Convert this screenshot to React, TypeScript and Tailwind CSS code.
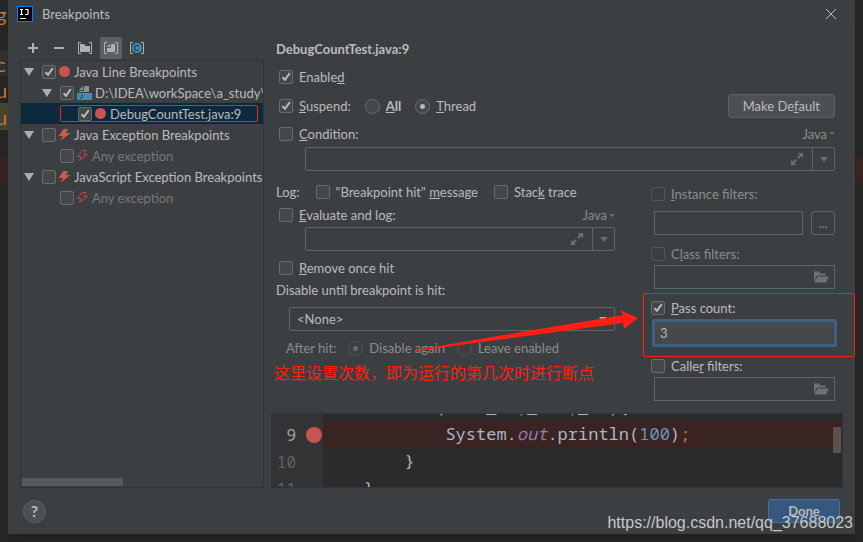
import { useState, type ReactNode } from "react";
import { clsx, type ClassValue } from "clsx";
import { twMerge } from "tailwind-merge";

function cn(...inputs: ClassValue[]) {
  return twMerge(clsx(inputs));
}

type TreeItem = {
  id: string;
  label: string;
  level: number;
  icon: "line" | "file" | "exception" | "exception-muted";
  checked?: boolean;
  expandable?: boolean;
  muted?: boolean;
  selected?: boolean;
};

const TREE: TreeItem[] = [
  { id: "java-line", label: "Java Line Breakpoints", level: 0, icon: "line", checked: true, expandable: true },
  { id: "file", label: "D:\\IDEA\\workSpace\\a_study\\", level: 1, icon: "file", checked: true, expandable: true },
  { id: "line-9", label: "DebugCountTest.java:9", level: 2, icon: "line", checked: true, selected: true },
  { id: "java-ex", label: "Java Exception Breakpoints", level: 0, icon: "exception", expandable: true },
  { id: "java-any", label: "Any exception", level: 1, icon: "exception-muted", muted: true },
  { id: "js-ex", label: "JavaScript Exception Breakpoints", level: 0, icon: "exception", expandable: true },
  { id: "js-any", label: "Any exception", level: 1, icon: "exception-muted", muted: true },
];

function CheckBox({ id, checked, disabled, label }: { id?: string; checked?: boolean; disabled?: boolean; label?: string }) {
  return (
    <span className="relative block size-[14px] shrink-0">
      <input
        id={id}
        type="checkbox"
        defaultChecked={checked}
        disabled={disabled}
        aria-label={label}
        className="peer block size-[14px] appearance-none rounded-xs border border-[#6b6b6b] bg-[#43494a] disabled:border-[#545556] disabled:bg-[#3c3f41]"
      />
      <svg viewBox="0 0 14 14" className="pointer-events-none absolute inset-0 hidden size-[14px] peer-checked:block">
        <path d="M3.5 7.2 6 9.8 10.8 3.2" fill="none" stroke="#bbbbbb" strokeWidth="2" />
      </svg>
    </span>
  );
}

function Option({ id, checked, disabled, className, children }: { id: string; checked?: boolean; disabled?: boolean; className?: string; children: ReactNode }) {
  return (
    <div className={cn("flex h-[22px] items-center gap-1.5", className)}>
      <CheckBox id={id} checked={checked} disabled={disabled} />
      <label htmlFor={id} className={cn("whitespace-nowrap", disabled && "text-[#8c8c8c]")}>{children}</label>
    </div>
  );
}

function Radio({ id, name, checked, muted, children }: { id: string; name: string; checked?: boolean; muted?: boolean; children: ReactNode }) {
  return (
    <div className="flex items-center gap-1.5">
      <span className="relative block size-[15px] shrink-0">
        <input
          id={id}
          name={name}
          type="radio"
          defaultChecked={checked}
          disabled={muted}
          className="peer block size-[15px] appearance-none rounded-full border border-[#6b6b6b] bg-[#43494a] disabled:border-[#545556] disabled:bg-[#3c3f41]"
        />
        <span className={cn("pointer-events-none absolute inset-[5px] hidden rounded-full bg-[#bbbbbb] peer-checked:block", muted && "bg-[#6b6b6b]")} />
      </span>
      <label htmlFor={id} className={cn("whitespace-nowrap", muted && "text-[#8c8c8c]")}>{children}</label>
    </div>
  );
}

function Arrow({ className }: { className?: string }) {
  return (
    <svg viewBox="0 0 10 8" preserveAspectRatio="none" className={cn("h-2 w-[10px]", className)}>
      <path d="M0 0h10L5 8z" fill="currentColor" />
    </svg>
  );
}

function TreeIcon({ icon }: { icon: TreeItem["icon"] }) {
  if (icon === "line") {
    return <span className="mx-px block size-[11px] rounded-full bg-[#c75450]" />;
  }
  if (icon === "file") {
    return (
      <svg viewBox="0 0 16 16" className="size-4">
        <path d="M8 1h5v6H3V6h5z" fill="#8b9296" />
        <path d="M7 1v4H3z" fill="#8b9296" />
        <path d="M1 8h15v7H1z" fill="#3e8faf" />
        <path d="M6 9.500v3q0 1-2 1" fill="none" stroke="#23343c" />
      </svg>
    );
  }
  const muted = icon === "exception-muted";
  return (
    <svg viewBox="0 0 13 13" className="size-[13px]">
      <path
        d={muted ? "M6 1.500h4L7.500 5.500H11.500L3.500 11.500 5.500 7.500H1.500z" : "M5.500 1H10L8 5h4.500L3 12.500 5 8H0.500z"}
        fill={muted ? "none" : "#d9534f"}
        stroke={muted ? "#a9504d" : "none"}
      />
    </svg>
  );
}

function TreeRow({ item }: { item: TreeItem }) {
  return (
    <li
      className={cn(
        "flex h-[21px] items-center",
        item.level === 0 && "pl-[3px]",
        item.level === 1 && "pl-[21px]",
        item.level === 2 && "pl-[39px]",
        item.selected && "bg-[#0d293e]"
      )}
    >
      <span
        className={cn(
          "relative flex h-[17px] items-center whitespace-nowrap",
          item.selected && "w-[198px] rounded-xs outline outline-[#ff1f14] -outline-offset-1"
        )}
      >
        <span className="flex w-[18px] shrink-0">{item.expandable && <Arrow className="text-[#adadad]" />}</span>
        <CheckBox checked={item.checked} label={item.label} />
        <span className="ml-0.5 mr-[3px] shrink-0">
          <TreeIcon icon={item.icon} />
        </span>
        <span className={cn(item.muted && "text-[#777777]")}>{item.label}</span>
      </span>
    </li>
  );
}

function Brackets({ children }: { children: ReactNode }) {
  return (
    <svg viewBox="0 0 16 16" className="size-4">
      <path d="M4 2.5H1.500v11H4M12 2.500h2.500v11H12" fill="none" stroke="#afb1b3" />
      {children}
    </svg>
  );
}

function Toolbar() {
  const button = "flex size-[22px] items-center justify-center rounded-xs";
  return (
    <div className="flex h-6 items-center gap-1 pl-0.5">
      <button aria-label="Add" className={button}>
        <svg viewBox="0 0 16 16" className="size-4">
          <path d="M8 3v10M3 8h10" stroke="#afb1b3" strokeWidth="2" />
        </svg>
      </button>
      <button aria-label="Remove" className={button}>
        <svg viewBox="0 0 16 16" className="size-4">
          <path d="M3 8h10" stroke="#afb1b3" strokeWidth="2" />
        </svg>
      </button>
      <button aria-label="Group by package" className={button}>
        <Brackets>
          <path d="M3 4h4l1.500 2H13v6H3z" fill="#afb1b3" />
        </Brackets>
      </button>
      <button aria-label="Group by file" aria-pressed="true" className={cn(button, "bg-[#5c6164]")}>
        <Brackets>
          <path d="M8 4h4v8H4V8h4z" fill="#afb1b3" />
          <path d="M7 4v3H4z" fill="#afb1b3" />
        </Brackets>
      </button>
      <button aria-label="Group by class" className={button}>
        <Brackets>
          <circle cx="8" cy="8" r="5" fill="#3e8faf" />
          <path d="M10 6.500a2.500 2.500 0 1 0 0 3" fill="none" stroke="#23343c" strokeWidth="1.200" />
        </Brackets>
      </button>
    </div>
  );
}

function LanguageButton() {
  return (
    <button className="flex items-center gap-0.5 text-[#8c8c8c]">
      Java
      <Arrow className="h-[3px] w-[6px] text-[#6b6b6b]" />
    </button>
  );
}

function ExpressionField({ label }: { label: string }) {
  return (
    <div className="ml-[29px] flex h-6 rounded-xs border border-[#646464]">
      <input aria-label={label} className="min-w-0 flex-1 bg-transparent px-2 outline-none" />
      <button aria-label="Expand" className="flex w-[30px] items-center justify-center">
        <svg viewBox="0 0 14 14" className="size-[14px] text-[#6e7173]">
          <path d="M8 1h5v5l-1.800-1.800L8.600 6.800 7.200 5.400 9.800 2.800zM6 13H1V8l1.800 1.800 2.600-2.600 1.400 1.400-2.600 2.600z" fill="currentColor" />
        </svg>
      </button>
      <button aria-label="History" className="flex w-[22px] items-center justify-center border-l border-[#646464]">
        <Arrow className="h-[5px] w-2 text-[#6b6b6b]" />
      </button>
    </div>
  );
}

function FilterField({ label }: { label: string }) {
  return (
    <div className="ml-[3px] flex h-6 items-center border border-[#646464] pr-[5px]">
      <input aria-label={label} className="min-w-0 flex-1 bg-transparent px-2 outline-none" />
      <button aria-label="Browse" className="shrink-0">
        <svg viewBox="0 0 16 14" className="h-[14px] w-4">
          <path d="M1 1.500h5l1.500 2H13v2H4L1 11z" fill="#6e7173" />
          <path d="M4.500 6.500H16l-3 6H1z" fill="#6e7173" />
        </svg>
      </button>
    </div>
  );
}

function PassCount() {
  const [count, setCount] = useState("3");
  return (
    <div className="relative mt-2">
      <Option id="pass-count" checked><u>P</u>ass count:</Option>
      <input
        aria-label="Pass count"
        value={count}
        onChange={(e) => setCount(e.target.value)}
        className="ml-px block h-7 w-[calc(100%+1px)] rounded-xs border-3 border-[#3d6185] bg-[#45494a] px-[5px] outline-none"
      />
      <div className="pointer-events-none absolute -bottom-[10px] -left-2 -right-[20px] -top-1 rounded-xs border border-[#ff1f14]" />
    </div>
  );
}

function BreakpointForm() {
  return (
    <div className="pl-[5px] pr-2">
      <h2 className="flex h-[26px] items-center font-bold">DebugCountTest.java:9</h2>
      <div className="flex h-[30px] items-center pl-[3px]">
        <Option id="enabled" checked>Enable<u>d</u></Option>
      </div>
      <div className="flex h-7 items-center pl-[3px]">
        <Option id="suspend" checked><u>S</u>uspend:</Option>
        <div className="ml-3.5 flex flex-1 gap-3.5">
          <Radio id="suspend-all" name="suspend"><b><u>A</u>ll</b></Radio>
          <Radio id="suspend-thread" name="suspend" checked><u>T</u>hread</Radio>
        </div>
        <button className="h-6 rounded-[3px] border border-[#5e6060] bg-[#4c5052] px-3.5">Make De<u>f</u>ault</button>
      </div>
      <div className="flex h-[27px] items-center justify-between pl-[3px]">
        <Option id="condition"><u>C</u>ondition:</Option>
        <LanguageButton />
      </div>
      <ExpressionField label="Condition" />

      <div className="flex gap-9">
        <div className="relative min-w-0 flex-1 pt-2.5">
          <div className="flex h-[22px] items-center gap-4">
            <span>Log:</span>
            <Option id="log-hit">"Breakpoint hit" <u>m</u>essage</Option>
            <Option id="log-stack">Stac<u>k</u> trace</Option>
          </div>
          <div className="flex h-6 items-center justify-between pl-[3px]">
            <Option id="evaluate"><u>E</u>valuate and log:</Option>
            <LanguageButton />
          </div>
          <ExpressionField label="Evaluate and log" />
          <Option id="remove" className="mt-1.5 pl-[3px]"><u>R</u>emove once hit</Option>
          <label htmlFor="disable-until" className="flex h-[22px] items-center">Disable until breakpoint is hit:</label>
          <div className="relative ml-[13px] mt-1.5">
            <select id="disable-until" className="block h-6 w-full appearance-none rounded-xs border border-[#646464] bg-transparent px-[7px] outline-none">
              <option>&lt;None&gt;</option>
            </select>
            <Arrow className="pointer-events-none absolute right-2 top-[10px] h-[5px] w-2 text-[#adadad]" />
          </div>
          <div className="mt-1.5 flex h-[22px] items-center gap-3 pl-2.5 text-[#8c8c8c]">
            <span>After hit:</span>
            <Radio id="disable-again" name="after-hit" checked muted>Disable again</Radio>
            <Radio id="leave-enabled" name="after-hit" muted>Leave enabled</Radio>
          </div>
          <p className="-ml-0.5 whitespace-nowrap text-base leading-7 text-[#ff1f14]">这里设置次数，即为运行的第几次时进行断点</p>
          <svg viewBox="0 0 224 44" className="pointer-events-none absolute -right-6 top-[137px] h-11 w-56">
            <path d="M0 42 208 7l-3-5 18 8-14 11-1-6L1 43z" fill="#ff1f14" />
          </svg>
        </div>

        <div className="w-[184px] shrink-0 pt-1">
          <Option id="instance" disabled className="mt-2"><u>I</u>nstance filters:</Option>
          <div className="ml-[3px] mt-1.5 flex gap-2">
            <input aria-label="Instance filters" className="h-6 min-w-0 flex-1 border border-[#646464] bg-transparent px-2 outline-none" />
            <button aria-label="Edit instance filters" className="h-6 w-6 rounded-[3px] border border-[#646464] text-[#8c8c8c]">...</button>
          </div>
          <Option id="class" disabled className="mt-2">C<u>l</u>ass filters:</Option>
          <FilterField label="Class filters" />
          <PassCount />
          <Option id="caller" className="mt-2">Calle<u>r</u> filters:</Option>
          <FilterField label="Caller filters" />
        </div>
      </div>
    </div>
  );
}

function CodeLine({ number, active, children }: { number: number; active?: boolean; children: ReactNode }) {
  return (
    <div className="flex h-[27px] leading-[26px]">
      <div className={cn("flex w-[51px] shrink-0 items-center bg-[#313335] text-[#606366]", active && "text-[#a4a3a3]")}>
        <span className="w-6 text-right text-base leading-[26px]">{number}</span>
        {active && <span className="ml-[10px] block size-4 rounded-full bg-[#c75450]" />}
      </div>
      <div className={cn("flex-1 whitespace-pre", active && "bg-[#3a2323]")}>{children}</div>
    </div>
  );
}

function Editor() {
  return (
    <div className="relative mt-3 h-[75px] overflow-hidden border border-[#323334] bg-[#2b2b2b] font-['Noto_Sans_Mono','DejaVu_Sans_Mono',monospace] text-[17px] text-[#a9b7c6]">
      <div className="-mt-5">
        <CodeLine number={8}>
          {"        for(int "}<u>i</u>=0<span className="text-[#cc7832]">;</span><u>i</u>&lt;10<span className="text-[#cc7832]">;</span><u>i</u>{"++){"}
        </CodeLine>
        <CodeLine number={9} active>
          {"            System."}<i className="text-[#9876aa]">out</i>.println(<span className="text-[#6897bb]">100</span>)<span className="text-[#cc7832]">;</span>
        </CodeLine>
        <CodeLine number={10}>{"        }"}</CodeLine>
        <CodeLine number={11}>{"    }"}</CodeLine>
      </div>
      <div className="absolute right-px top-[13px] h-[26px] w-2 bg-white/20" />
    </div>
  );
}

function BreakpointsDialog() {
  return (
    <section role="dialog" aria-label="Breakpoints" className="relative flex min-w-0 flex-1 flex-col bg-[#3c3f41] shadow-lg">
      <header className="flex h-7 items-center justify-between pl-[9px] pr-[18px]">
        <div className="flex items-center gap-[9px]">
          <svg viewBox="0 0 16 16" className="size-4">
            <path d="M0 0h16v16H0z" fill="#087cfa" />
            <path d="M1 1h14v14H1z" fill="#000" />
            <path d="M3 3.500h3M4.500 3.500v5M3 8.500h3M8 3.500h3v4q0 1-1.300 1H8M3 12.500h6" fill="none" stroke="#fff" strokeWidth="1.200" />
          </svg>
          <h1>Breakpoints</h1>
        </div>
        <button aria-label="Close">
          <svg viewBox="0 0 12 12" className="size-3">
            <path d="m1 1 10 10M11 1 1 11" stroke="#bbbbbb" />
          </svg>
        </button>
      </header>

      <div className="flex gap-[7px] pl-3 pr-3 pt-2">
        <div className="flex w-[244px] shrink-0 flex-col">
          <Toolbar />
          <div className="flex flex-1 flex-col justify-between overflow-hidden border border-[#323334]">
            <ul>
              {TREE.map((item) => (
                <TreeRow key={item.id} item={item} />
              ))}
            </ul>
            <div className="mb-px ml-px h-2 w-[101px] bg-[#595a5b]" />
          </div>
        </div>
        <div className="min-w-0 flex-1">
          <BreakpointForm />
          <Editor />
        </div>
      </div>

      <footer className="flex h-[46px] items-center justify-between pl-[15px] pr-[15px]">
        <button aria-label="Help" className="flex size-[23px] items-center justify-center rounded-full border border-[#5e6060] bg-[#4c5052] text-base font-bold">?</button>
        <button className="h-6 w-[72px] rounded-[3px] border border-[#4c708c] bg-[#365880] font-bold">Done</button>
      </footer>
      <span className="pointer-events-none absolute bottom-px right-0.5 font-['Liberation_Sans',sans-serif] text-base leading-5 text-[#c8c8c8]">https://blog.csdn.net/qq_37688023</span>
    </section>
  );
}

export default function App() {
  return (
    <div className="flex min-h-screen bg-[#262626] pb-2 font-['Lato','Noto_Sans_CJK_SC',sans-serif] text-[13px] leading-[18px] text-[#bbbbbb]">
      <aside className="flex w-2 shrink-0 flex-col overflow-hidden text-xl text-[#cc7832]">
        <span className="-ml-1 h-[50px]">g</span>
        <span className="-ml-1 h-[26px] bg-[#303030]">c</span>
        <span className="-ml-1 h-[27px]">u</span>
        <span className="-ml-1 h-[27px] bg-[#4a4630]">u</span>
        <span className="mt-7 h-[26px] bg-[#3a2323]" />
      </aside>
      <BreakpointsDialog />
      <aside className="w-2 shrink-0">
        <div className="mt-[157px] h-[26px] bg-[#3a2323]" />
      </aside>
    </div>
  );
}
